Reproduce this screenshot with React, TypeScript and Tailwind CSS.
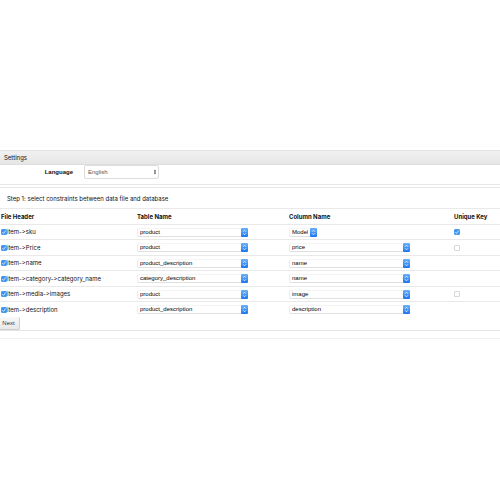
import React, { useState } from 'react';
import clsx from 'clsx';

interface Mapping {
    header: string;
    table: string;
    column: string;
    narrow?: boolean;
    unique?: boolean;
}

const mappings: Mapping[] = [
    { header: 'item->sku', table: 'product', column: 'Model', narrow: true, unique: true },
    { header: 'item->Price', table: 'product', column: 'price', unique: false },
    { header: 'item->name', table: 'product_description', column: 'name' },
    { header: 'item->category->category_name', table: 'category_description', column: 'name' },
    { header: 'item->media->images', table: 'product', column: 'image', unique: false },
    { header: 'item->description', table: 'product_description', column: 'description' },
];

const tables = ['product', 'product_description', 'category_description'];
const columns = ['Model', 'price', 'name', 'image', 'description'];

const Checkbox: React.FC<{ label: string; initial: boolean }> = ({ label, initial }) => {
    const [checked, setChecked] = useState(initial);

    return (
        <span className="relative block size-1.5 shrink-0">
            <input
                type="checkbox"
                aria-label={label}
                checked={checked}
                onChange={(e) => setChecked(e.target.checked)}
                className="block size-1.5 appearance-none rounded-[1px] border border-[#d8d8d8] bg-white checked:border-[#4a9df0] checked:bg-[#3b93ee]"
            />
            {checked && (
                <svg viewBox="0 0 12 12" className="pointer-events-none absolute inset-0 size-1.5" fill="none" stroke="white" strokeWidth="1.6">
                    <path d="M2.8 6.4 5 8.8 9.4 3" />
                </svg>
            )}
        </span>
    );
};

const BlueSelect: React.FC<{ label: string; value: string; options: string[]; className: string }> = ({ label, value, options, className }) => (
    <div className={clsx('relative h-[9px]', className)}>
        <select
            aria-label={label}
            defaultValue={value}
            className="block h-[9px] w-full appearance-none rounded-[2px] border border-t-[#f4f4f4] border-x-[#ececec] border-b-[#e0e0e0] bg-white pr-2 pl-0.5 font-['Liberation_Sans',sans-serif] text-[6px] leading-[7px] text-black"
        >
            {options.map((option) => (
                <option key={option}>{option}</option>
            ))}
        </select>
        <span className="pointer-events-none absolute top-0 right-0 h-[9px] w-[7px] rounded-[1px] bg-linear-to-b from-[#68b1f8] to-[#1c74ef]">
            <svg viewBox="0 0 14 18" className="h-[9px] w-[7px]" fill="none" stroke="white" strokeWidth="1.6">
                <path d="M4 7.5 7 4.5l3 3M4 10.5l3 3 3-3" />
            </svg>
        </span>
    </div>
);

export default function App() {
    return (
        <div className="min-h-screen bg-white pt-[150px] font-['Inter','Liberation_Sans',sans-serif] text-[6px] leading-[8px] text-[#111] [font-feature-settings:'calt'_0]">
            <header className="flex h-[15px] items-center border-y border-t-[#e4e4e4] border-b-[#dedede] bg-linear-to-b from-[#f1f1f1] to-[#e6e6e6] px-1">
                <h1 className="pt-px">Settings</h1>
            </header>

            <div className="flex h-5 items-start border-b border-[#e8e8e8]">
                <label htmlFor="language" className="w-[73px] pt-[3px] text-right font-['Liberation_Sans',sans-serif] font-bold">
                    Language
                </label>
                <div className="relative ml-[11px] w-[75px]">
                    <select
                        id="language"
                        defaultValue="English"
                        className="block h-3.5 w-full appearance-none rounded-[2px] border border-[#dcdcdc] bg-white px-[3px] font-['Liberation_Sans',sans-serif] text-[6px] leading-[8px] text-[#555]"
                    >
                        <option>English</option>
                    </select>
                    <svg viewBox="0 0 8 12" className="pointer-events-none absolute top-1 right-0.5 h-1.5 w-1" fill="#333">
                        <path d="M4 1 6.2 5H1.8zM4 11 1.8 7h4.4z" />
                    </svg>
                </div>
            </div>

            <main className="mt-0.5 border-t border-[#e8e8e8]">
                <h2 className="flex h-5 items-center px-[7px] pt-px">Step 1: select constraints between data file and database</h2>

                <table className="w-full table-fixed border-separate border-spacing-0">
                    <colgroup>
                        <col className="w-[27.4%]" />
                        <col className="w-[30.4%]" />
                        <col className="w-[33%]" />
                        <col />
                    </colgroup>
                    <thead>
                        <tr className="h-4 text-left *:border-t *:border-[#e9e9e9]">
                            <th className="p-0 pl-px">File Header</th>
                            <th className="p-0">Table Name</th>
                            <th className="p-0">Column Name</th>
                            <th className="p-0">Unique Key</th>
                        </tr>
                    </thead>
                    <tbody>
                        {mappings.map((row) => (
                            <tr key={row.header} className="h-4 *:border-t *:border-[#e9e9e9] odd:h-[15px]">
                                <td className="p-0 pl-px">
                                    <div className="flex items-center">
                                        <Checkbox label={row.header} initial />
                                        <span>{row.header}</span>
                                    </div>
                                </td>
                                <td className="p-0">
                                    <BlueSelect label={`Table for ${row.header}`} value={row.table} options={tables} className="w-[111px]" />
                                </td>
                                <td className="p-0">
                                    <BlueSelect
                                        label={`Column for ${row.header}`}
                                        value={row.column}
                                        options={columns}
                                        className={row.narrow ? 'w-7' : 'w-[121px]'}
                                    />
                                </td>
                                <td className="p-0">
                                    {row.unique !== undefined && <Checkbox label={`Unique key ${row.header}`} initial={row.unique} />}
                                </td>
                            </tr>
                        ))}
                    </tbody>
                </table>

                <div className="border-b border-[#e4e4e4]">
                    <button
                        type="button"
                        className="block h-[13px] w-5 rounded-r-[2px] border-r border-b border-[#cfcfcf] bg-linear-to-b from-[#f8f8f8] to-[#e9e9e9] pr-0.5 font-['Liberation_Sans',sans-serif] text-[#333]"
                    >
                        Next
                    </button>
                </div>
            </main>

            <footer className="h-2 border-b border-[#f0f0f0]" />
        </div>
    );
}
